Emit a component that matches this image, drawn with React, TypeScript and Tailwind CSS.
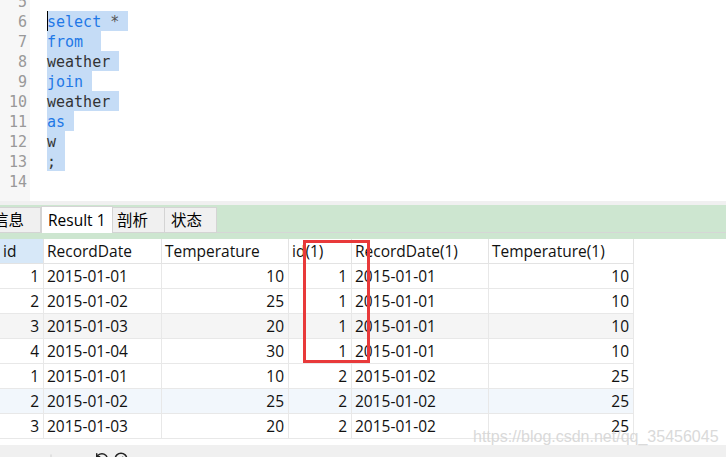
import React from "react";
import { RotateCcw, CircleSlash, Plus, Minus } from "lucide-react";

type Tok = { t: string; kw?: boolean; pad: string };

const lines: { n: number; tok?: Tok }[] = [
  { n: 5 },
  { n: 6, tok: { t: "select", kw: true, pad: " * " } },
  { n: 7, tok: { t: "from", kw: true, pad: "  " } },
  { n: 8, tok: { t: "weather", pad: " " } },
  { n: 9, tok: { t: "join", kw: true, pad: " " } },
  { n: 10, tok: { t: "weather", pad: " " } },
  { n: 11, tok: { t: "as", kw: true, pad: " " } },
  { n: 12, tok: { t: "w", pad: " " } },
  { n: 13, tok: { t: ";", pad: " " } },
  { n: 14 },
];

const rows = [
  ["1", "2015-01-01", "10", "1", "2015-01-01", "10"],
  ["2", "2015-01-02", "25", "1", "2015-01-01", "10"],
  ["3", "2015-01-03", "20", "1", "2015-01-01", "10"],
  ["4", "2015-01-04", "30", "1", "2015-01-01", "10"],
  ["1", "2015-01-01", "10", "2", "2015-01-02", "25"],
  ["2", "2015-01-02", "25", "2", "2015-01-02", "25"],
  ["3", "2015-01-03", "20", "2", "2015-01-02", "25"],
];

const rowBg = ["bg-white", "bg-white", "bg-[#f5f5f5]", "bg-white", "bg-white", "bg-[#f2f7fc]", "bg-white"];

const widths = ["w-[44px]", "w-[118px]", "w-[127px]", "w-[63px]", "w-[137px]", "w-[145px]"];
const headers = ["id", "RecordDate", "Temperature", "id(1)", "RecordDate(1)", "Temperature(1)"];
const rightAlign = [true, false, true, true, false, true];

const uiFont = { fontFamily: '"Open Sans","Noto Sans CJK SC",sans-serif' };
const monoFont = { fontFamily: '"DejaVu Sans Mono","Liberation Mono",monospace' };

export default function App() {
  return (
    <div className="relative w-[726px] h-[457px] overflow-hidden bg-white flex flex-col" style={uiFont}>
      {/* Editor */}
      <div className="h-[201px] flex overflow-hidden shrink-0">
        <div className="w-[30px] bg-[#f7f7f7] shrink-0 text-[15px] text-[#999999]" style={monoFont}>
          <div className="-mt-[9px]">
            {lines.map((l) => (
              <div key={l.n} className="h-[20px] leading-[20px] text-right pr-[3px]">
                <span className="relative top-px">{l.n}</span>
              </div>
            ))}
          </div>
        </div>
        <div className="flex-1 pl-[17px] text-[15px]" style={monoFont}>
          <div className="-mt-[9px]">
            {lines.map((l) => (
              <div key={l.n} className="h-[20px] leading-[20px] flex">
                {l.tok && (
                  <span className="relative bg-[#c5dcf6] whitespace-pre h-[20px]">
                    {l.n === 6 && <span className="absolute left-0 top-0 w-px h-[20px] bg-black" />}
                    <span className={`relative top-px ${l.tok.kw ? "text-[#1f78e6]" : "text-[#333333]"}`}>{l.tok.t}</span>
                    <span className="relative top-px text-[#555555]">{l.tok.pad}</span>
                  </span>
                )}
              </div>
            ))}
          </div>
        </div>
      </div>

      {/* separator */}
      <div className="h-[4px] bg-[#f0f0f0] shrink-0" />

      {/* Tabs */}
      <div className="h-[34px] bg-[#cde6d0] shrink-0 relative">
        <div className="absolute left-0 right-0 top-[27px] h-px bg-[#d6d6d6]" />
        <div className="flex items-start pt-[1px] text-[15.5px] text-black relative">
          <div className="w-[53px] -ml-[12px] h-[26px] mt-[1px] pt-[2px] bg-[#f0f0f0] border border-[#d4d4d4] flex items-center pl-[4px] leading-none">
            信息
          </div>
          <div className="w-[72px] h-[27px] pt-[2px] bg-white border-x border-t border-[#d4d4d4] flex items-center pl-[6px] leading-none">
            Result 1
          </div>
          <div className="w-[52px] h-[26px] mt-[1px] pt-[2px] bg-[#f0f0f0] border-y border-r border-[#d4d4d4] flex items-center pl-[4px] leading-none">
            剖析
          </div>
          <div className="w-[52px] h-[26px] mt-[1px] pt-[2px] bg-[#f0f0f0] border-y border-r border-[#d4d4d4] flex items-center pl-[6px] leading-none">
            状态
          </div>
        </div>
      </div>

      {/* Table */}
      <div className="flex-1 flex flex-col text-[15.5px] text-[#111111]">
        <div className="flex h-[25px]">
          {headers.map((h, i) => (
            <div
              key={h}
              className={`${widths[i]} shrink-0 h-[25px] pt-[2px] border-r border-b border-[#e3e3e3] flex items-center pl-[3px] whitespace-nowrap ${
                i === 0 ? "bg-[#d7e8f8]" : "bg-white"
              }`}
            >
              {h}
            </div>
          ))}
        </div>
        {rows.map((r, ri) => (
          <div key={ri} className={`flex h-[25px] ${rowBg[ri]} w-[634px]`}>
            {r.map((c, ci) => (
              <div
                key={ci}
                className={`${widths[ci]} shrink-0 h-[25px] pt-[2px] border-r border-b border-[#e8e8e8] flex items-center whitespace-nowrap ${
                  rightAlign[ci] ? "justify-end pr-[4px]" : "pl-[3px]"
                }`}
              >
                {c}
              </div>
            ))}
          </div>
        ))}
      </div>

      {/* bottom bar */}
      <div className="h-[12px] bg-[#f0f0f0] shrink-0 overflow-hidden flex items-start gap-[5px] pl-[44px] pt-[7px]">
        <Plus size={14} className="text-[#d4d4d4]" strokeWidth={2} />
        <Minus size={14} className="text-[#d4d4d4]" strokeWidth={2} />
        <span className="w-[8px]" />
        <RotateCcw size={14} className="text-[#222222]" strokeWidth={2.5} />
        <CircleSlash size={14} className="text-[#222222]" strokeWidth={2.5} />
      </div>

      {/* red annotation box */}
      <div className="absolute left-[303px] top-[240px] w-[67px] h-[123px] border-[3px] border-[#e8393a]" />

      {/* watermark */}
      <div
        className="absolute left-[473px] top-[427px] text-[16px] leading-[20px] text-[#d6d6d6] whitespace-nowrap opacity-90"
        style={{ fontFamily: '"Liberation Sans",Arial,sans-serif' }}
      >
        https://blog.csdn.net/qq_35456045
      </div>
    </div>
  );
}
